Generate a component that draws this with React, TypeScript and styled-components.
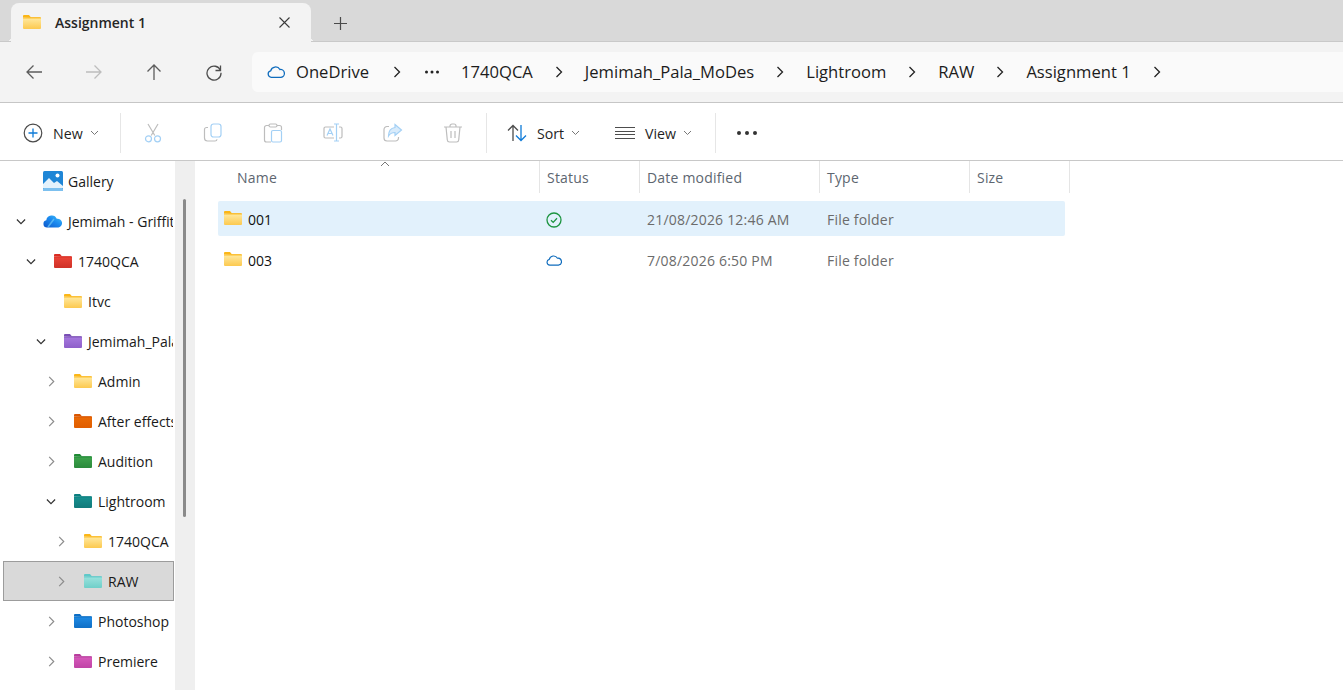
import React, { useId } from 'react';
import styled, { createGlobalStyle } from 'styled-components';

const UI_FONT = '"Open Sans", "Noto Sans", "Liberation Sans", sans-serif';

const GlobalStyle = createGlobalStyle`
  html, body {
    margin: 0;
    padding: 0;
    height: 100%;
    background: #ffffff;
    overflow: hidden;
  }
  body {
    font-family: ${UI_FONT};
    color: #1a1a1a;
  }
  #root {
    height: 100%;
  }
`;

const Window = styled.div`
  display: flex;
  flex-direction: column;
  width: 1343px;
  height: 690px;
  overflow: hidden;
`;

/* Tab strip */
const TabStrip = styled.div`
  display: flex;
  align-items: flex-end;
  height: 41px;
  padding-left: 11px;
  background: #d9d9d9;
  border-bottom: 1px solid #c9c9c9;
  flex-shrink: 0;
`;

const Tab = styled.div`
  position: relative;
  display: flex;
  align-items: center;
  width: 300px;
  height: 39px;
  margin-bottom: -1px;
  padding: 0 21px 1px 12px;
  box-sizing: border-box;
  background: #f3f3f3;
  border-radius: 8px 8px 0 0;

  &::before,
  &::after {
    content: '';
    position: absolute;
    bottom: 1px;
    width: 4px;
    height: 4px;
  }
  &::before {
    left: -4px;
    background: radial-gradient(circle at 0 0, transparent 4px, #f3f3f3 4px);
  }
  &::after {
    right: -4px;
    background: radial-gradient(circle at 100% 0, transparent 4px, #f3f3f3 4px);
  }
`;

const TabTitle = styled.span`
  flex: 1;
  margin-left: 14px;
  font-size: 14px;
  font-weight: 600;
  color: #262626;
`;

const NewTab = styled.div`
  display: flex;
  margin: 0 0 11px 23px;
`;

/* Navigation bar */
const NavBar = styled.div`
  display: flex;
  align-items: center;
  height: 60px;
  background: #f3f3f3;
  border-bottom: 1px solid #c6c6c6;
  flex-shrink: 0;
`;

const NavButtons = styled.div`
  display: grid;
  grid-template-columns: repeat(4, 60px);
  justify-items: center;
  width: 252px;
  padding-left: 4px;
  box-sizing: border-box;
`;

const AddressBar = styled.div`
  flex: 1;
  display: flex;
  align-items: center;
  gap: 21px;
  height: 40px;
  padding-left: 15px;
  background: #fafafa;
  border-radius: 6px 0 0 6px;
  font-size: 16.6px;
  color: #1c1c1c;
  white-space: nowrap;
`;

const Crumb = styled.span`
  display: inline-flex;
  align-items: center;
  padding-bottom: 1px;
`;

const CloudCrumb = styled(Crumb)`
  gap: 11px;
  margin-right: 2px;
`;

const CrumbDots = styled.span`
  display: flex;
  margin-left: 2px;
`;

/* Command bar */
const CommandBar = styled.div`
  display: flex;
  align-items: center;
  height: 58px;
  padding-top: 3px;
  box-sizing: border-box;
  background: #ffffff;
  border-bottom: 1px solid #c8c8c8;
  flex-shrink: 0;
`;

const CommandLabel = styled.button<{ $width: number; $pad: number }>`
  display: flex;
  align-items: center;
  width: ${(p) => p.$width}px;
  height: 40px;
  padding: 0 0 0 ${(p) => p.$pad}px;
  box-sizing: border-box;
  border: 0;
  background: none;
  font: 400 14.2px ${UI_FONT};
  color: #1f1f1f;
`;

const LabelText = styled.span`
  margin: 0 7px 0 10px;
`;

const IconCommand = styled.div`
  display: flex;
  justify-content: center;
  width: 60px;
`;

const Divider = styled.div`
  width: 1px;
  height: 40px;
  background: #e6e6e6;
  flex-shrink: 0;
`;

const IconGroup = styled.div`
  display: flex;
  padding: 0 3px 0 2px;
`;

const More = styled.div`
  display: flex;
  margin-left: 21px;
`;

/* Body */
const Body = styled.div`
  flex: 1;
  display: flex;
  min-height: 0;
`;

const Tree = styled.nav`
  width: 175px;
  flex-shrink: 0;
  overflow: hidden;
`;

const TreeRow = styled.div<{ $level: number; $selected?: boolean }>`
  display: flex;
  align-items: center;
  width: 171px;
  height: 40px;
  margin-left: 3px;
  padding-left: ${(p) => 12 + p.$level * 10}px;
  box-sizing: border-box;
  overflow: hidden;
  white-space: nowrap;
  font-size: 14px;
  color: #1a1a1a;
  border: 1px solid ${(p) => (p.$selected ? '#9c9c9c' : 'transparent')};
  background: ${(p) => (p.$selected ? '#d9d9d9' : 'transparent')};
`;

const TreeChevronSlot = styled.span`
  display: flex;
  justify-content: center;
  width: 10px;
  margin-right: 17px;
  flex-shrink: 0;
`;

const TreeIcon = styled.span`
  display: flex;
  justify-content: center;
  width: 20px;
  margin-right: 5px;
  flex-shrink: 0;
`;

const ScrollTrack = styled.div`
  width: 20px;
  margin-right: 1px;
  padding: 38px 0 0 8px;
  box-sizing: border-box;
  background: #efefef;
  flex-shrink: 0;
`;

const ScrollThumb = styled.div`
  width: 3px;
  height: 318px;
  border-radius: 2px;
  background: #8a8a8a;
`;

/* File list */
const ListPane = styled.main`
  flex: 1;
  padding-left: 22px;
`;

const ListHeader = styled.div`
  position: relative;
  display: grid;
  grid-template-columns: 322px 100px 180px 150px 100px;
  width: 852px;
  height: 32px;
  margin-bottom: 8px;
`;

const HeaderCell = styled.div<{ $pad?: number }>`
  padding: 1px 0 0 ${(p) => p.$pad ?? 7}px;
  border-right: 1px solid #e5e5e5;
  display: flex;
  align-items: center;
  font-size: 14px;
  letter-spacing: 0.2px;
  color: #5d6670;
`;

const SortCaret = styled.svg`
  position: absolute;
  left: 162px;
  top: 0;
`;

const FileRow = styled.div<{ $selected?: boolean }>`
  display: grid;
  grid-template-columns: 322px 100px 180px 150px 95px;
  width: 847px;
  height: 35px;
  margin-bottom: 6px;
  border-radius: 2px;
  background: ${(p) => (p.$selected ? '#e2f1fc' : 'transparent')};
  font-size: 14px;
  line-height: 19px;
`;

const NameCell = styled.div`
  display: flex;
  align-items: flex-start;
  gap: 6px;
  padding: 10px 0 0 6px;
  color: #111111;
`;

const NameText = styled.span`
  margin-top: -1px;
`;

const StatusCell = styled.div<{ $top: number }>`
  display: flex;
  align-items: flex-start;
  padding: ${(p) => p.$top}px 0 0 6px;
`;

const MutedCell = styled.div`
  padding: 9px 0 0 7px;
  letter-spacing: 0.2px;
  color: #6b6b6b;
`;

/* Icons */
interface FolderTone {
  tab: string;
  top: string;
  bottom: string;
}

const tones: Record<string, FolderTone> = {
  yellow: { tab: '#fbb617', top: '#ffe9a0', bottom: '#fcc94f' },
  red: { tab: '#d92d22', top: '#ea4438', bottom: '#cf3127' },
  purple: { tab: '#7a4fb5', top: '#a679de', bottom: '#8e5fca' },
  orange: { tab: '#d95600', top: '#ea6a05', bottom: '#e05d00' },
  green: { tab: '#1f8a35', top: '#3da34c', bottom: '#2b8a3c' },
  teal: { tab: '#0b7f80', top: '#17908f', bottom: '#127a7b' },
  aqua: { tab: '#5fc9c9', top: '#9ae2dd', bottom: '#6fcfc9' },
  blue: { tab: '#0c6ec6', top: '#1f8ae4', bottom: '#0f6fc6' },
  magenta: { tab: '#b93d9e', top: '#d659bb', bottom: '#c043a6' },
};

const Folder = ({ tone = 'yellow' }: { tone?: string }) => {
  const id = useId();
  const c = tones[tone];
  return (
    <svg width="18" height="14" viewBox="0 0 18 14">
      <defs>
        <linearGradient id={id} x1="0" y1="0" x2="0" y2="1">
          <stop offset="0" stopColor={c.top} />
          <stop offset="1" stopColor={c.bottom} />
        </linearGradient>
      </defs>
      <path d="M0 1a1 1 0 0 1 1-1h5l2 2.500H0Z" fill={c.tab} />
      <path d="M0 3h18v10a1 1 0 0 1-1 1H1a1 1 0 0 1-1-1Z" fill={`url(#${id})`} />
      <path d="M8 2h9a1 1 0 0 1 1 1v.500H0V2.400Z" fill={c.tab} opacity="0.85" />
    </svg>
  );
};

const Chevron = ({ open, dim }: { open?: boolean; dim?: boolean }) => (
  <svg width="11" height="11" viewBox="0 0 11 11" fill="none" stroke={dim ? '#8c8c8c' : '#333333'} strokeWidth="1.3">
    {open ? <path d="M1 3.300l4.500 4.500L10 3.300" /> : <path d="M3.500 0.500 8.500 5.500l-5 5" />}
  </svg>
);

const CrumbChevron = () => (
  <svg width="10" height="12" viewBox="0 0 10 12" fill="none" stroke="#222222" strokeWidth="1.3">
    <path d="M2.500 1 7.500 6l-5 5" />
  </svg>
);

const Caret = () => (
  <svg width="9" height="6" viewBox="0 0 9 6" fill="none" stroke="#777777" strokeWidth="1">
    <path d="M1 1l3.500 3.500L8 1" />
  </svg>
);

const Arrow = ({ dir, color }: { dir: 'left' | 'right' | 'up'; color: string }) => {
  const d = {
    left: 'M17 9H2M8.500 2.500 2 9l6.500 6.500',
    right: 'M1 9h15M9.500 2.500 16 9l-6.500 6.500',
    up: 'M9 17V2M2.500 8.500 9 2l6.500 6.500',
  }[dir];
  return (
    <svg width="18" height="18" viewBox="0 0 18 18" fill="none" stroke={color} strokeWidth="1.3">
      <path d={d} />
    </svg>
  );
};

const Refresh = () => (
  <svg width="18" height="18" viewBox="0 0 18 18" fill="none" stroke="#4d4d4d" strokeWidth="1.3">
    <path d="M15.500 7.500A7 7 0 1 0 16 9.800" />
    <path d="M15.500 2.500v5h-5" />
  </svg>
);

const CloudOutline = ({ size = 18 }: { size?: number }) => (
  <svg width={size} height={Math.round(size * 0.72)} viewBox="0 0 18 13" fill="none" stroke="#0f6cbd" strokeWidth="1.300">
    <path d="M4.300 12.300A3.300 3.300 0 0 1 3.700 5.800 5 5 0 0 1 12.900 4.500 3.900 3.900 0 0 1 14 12.300Z" />
  </svg>
);

const StatusOk = () => (
  <svg width="16" height="16" viewBox="0 0 16 16" fill="none" stroke="#1c9440" strokeWidth="1.300">
    <circle cx="8" cy="8" r="7" />
    <path d="M5 8.200l2.200 2.200L11 6.300" />
  </svg>
);

const CirclePlus = () => (
  <svg width="20" height="20" viewBox="0 0 20 20" fill="none">
    <circle cx="10" cy="10" r="8.800" stroke="#4a4a4a" strokeWidth="1.200" />
    <path d="M10 5.500v9M5.500 10h9" stroke="#0f7bd8" strokeWidth="1.300" />
  </svg>
);

const GREY = '#bdbdbd';
const TINT = '#a3d0f5';

const Cut = () => (
  <svg width="20" height="20" viewBox="0 0 20 20" fill="none" strokeWidth="1.200">
    <path d="M5 1l6.800 11.500M15 1 8.200 12.500" stroke={GREY} />
    <circle cx="5.500" cy="15.800" r="3" stroke={TINT} />
    <circle cx="14.500" cy="15.800" r="3" stroke={TINT} />
  </svg>
);

const Copy = () => (
  <svg width="20" height="20" viewBox="0 0 20 20" fill="none" strokeWidth="1.200">
    <path d="M5 4.500H3.500A2 2 0 0 0 1.500 6.500V15a3 3 0 0 0 3 3H12a2 2 0 0 0 2-1.800" stroke={GREY} />
    <rect x="8" y="1" width="10" height="13" rx="2.500" stroke={TINT} fill="#ffffff" />
  </svg>
);

const Paste = () => (
  <svg width="20" height="20" viewBox="0 0 20 20" fill="none" strokeWidth="1.200">
    <path d="M6 2.500H3.500A2 2 0 0 0 1.500 4.500V17a2 2 0 0 0 2 2H8M14 2.500h2.500a2 2 0 0 1 2 2V7" stroke={GREY} />
    <rect x="6" y="1" width="8" height="3" rx="1.500" stroke={GREY} />
    <rect x="8.500" y="7.500" width="10" height="11.500" rx="1.500" stroke={TINT} fill="#ffffff" />
  </svg>
);

const Rename = () => (
  <svg width="20" height="20" viewBox="0 0 20 20" fill="none" strokeWidth="1.200">
    <path d="M11 4H2.500A1.500 1.500 0 0 0 1 5.500v8A1.500 1.500 0 0 0 2.500 15H11M16 4h1.500A1.500 1.500 0 0 1 19 5.500v8a1.500 1.500 0 0 1-1.500 1.500H16" stroke={GREY} />
    <path d="M11 1h5M11 18h5M13.500 1v17" stroke={TINT} />
    <path d="M4 12.500 7 6l3 6.500M5 10.500h4" stroke={TINT} />
  </svg>
);

const Share = () => (
  <svg width="20" height="20" viewBox="0 0 20 20" fill="none" strokeWidth="1.200">
    <path d="M6 3.500H4A3 3 0 0 0 1 6.500V15a3 3 0 0 0 3 3h8.500a3 3 0 0 0 3-3v-1" stroke={GREY} />
    <path d="M12 1.500 18.500 7 12 12.500V9.500c-3 0-5 1-6.500 3.500 0-5 2.500-8 6.500-8.500Z" stroke={TINT} fill="#d8ebfb" />
  </svg>
);

const Trash = () => (
  <svg width="20" height="20" viewBox="0 0 20 20" fill="none" stroke={GREY} strokeWidth="1.200">
    <path d="M1 4h18M7 4V3a2 2 0 0 1 2-2h2a2 2 0 0 1 2 2v1M3 4l1.300 13a2.200 2.200 0 0 0 2.200 2h7a2.200 2.200 0 0 0 2.200-2L17 4M8 8v7M12 8v7" />
  </svg>
);

const SortIcon = () => (
  <svg width="20" height="18" viewBox="0 0 20 18" fill="none" strokeWidth="1.300">
    <path d="M6 17V1.500M1 6.500l5-5 5 5" stroke="#4d4d4d" />
    <path d="M14 1v15.500M9 11.500l5 5 5-5" stroke="#0f7bd8" />
  </svg>
);

const ViewIcon = () => (
  <svg width="20" height="14" viewBox="0 0 20 14" fill="none" stroke="#4d4d4d" strokeWidth="1">
    <path d="M0 1.500h20M0 5.500h20M0 8.500h20M0 12.500h20" />
  </svg>
);

const Dots = ({ size = 20, gap = 8, r = 2, color = '#333333' }: { size?: number; gap?: number; r?: number; color?: string }) => (
  <svg width={size} height="4" viewBox={`0 0 ${size} 4`} fill={color}>
    <circle cx={r} cy="2" r={r} />
    <circle cx={r + gap} cy="2" r={r} />
    <circle cx={r + gap * 2} cy="2" r={r} />
  </svg>
);

const GalleryIcon = () => (
  <svg width="20" height="20" viewBox="0 0 20 20">
    <rect x="0" y="0" width="20" height="20" rx="1.500" fill="#1f86d6" />
    <rect x="0" y="17" width="20" height="3" rx="1" fill="#7cc0ef" />
    <path d="M0 17v-4l6-6 5 5 3-2 6 5v2Z" fill="#e4f2fc" />
    <circle cx="14.500" cy="4.500" r="2" fill="#ffffff" />
  </svg>
);

const OneDriveIcon = () => (
  <svg width="20" height="14" viewBox="0 0 20 14">
    <defs>
      <linearGradient id="onedrive-fill" x1="0" y1="1" x2="1" y2="0">
        <stop offset="0" stopColor="#0b56c9" />
        <stop offset="0.55" stopColor="#1b8bf0" />
        <stop offset="1" stopColor="#46c4f7" />
      </linearGradient>
    </defs>
    <path d="M4 13.500A3.700 3.700 0 0 1 3.300 6.200 5.500 5.500 0 0 1 13.800 4.800 4.400 4.400 0 0 1 15.500 13.500Z" fill="url(#onedrive-fill)" />
    <path d="M5 13 11 5" stroke="#6cc8f7" strokeWidth="1.500" opacity="0.7" />
  </svg>
);

const CloseX = () => (
  <svg width="11" height="11" viewBox="0 0 11 11" fill="none" stroke="#3a3a3a" strokeWidth="1.100">
    <path d="M0.500 0.500l10 10M10.500 0.500l-10 10" />
  </svg>
);

const PlusIcon = () => (
  <svg width="13" height="13" viewBox="0 0 13 13" fill="none" stroke="#4a4a4a" strokeWidth="1.200">
    <path d="M6.500 0v13M0 6.500h13" />
  </svg>
);

/* Data */
interface TreeItem {
  label: string;
  level: number;
  tone?: string;
  icon?: 'gallery' | 'onedrive';
  chevron?: 'open' | 'closed';
  selected?: boolean;
}

const treeItems: TreeItem[] = [
  { label: 'Gallery', level: 0, icon: 'gallery' },
  { label: 'Jemimah - Griffith University', level: 0, icon: 'onedrive', chevron: 'open' },
  { label: '1740QCA', level: 1, tone: 'red', chevron: 'open' },
  { label: 'Itvc', level: 2, tone: 'yellow' },
  { label: 'Jemimah_Pala_MoDes', level: 2, tone: 'purple', chevron: 'open' },
  { label: 'Admin', level: 3, tone: 'yellow', chevron: 'closed' },
  { label: 'After effects', level: 3, tone: 'orange', chevron: 'closed' },
  { label: 'Audition', level: 3, tone: 'green', chevron: 'closed' },
  { label: 'Lightroom', level: 3, tone: 'teal', chevron: 'open' },
  { label: '1740QCA', level: 4, tone: 'yellow', chevron: 'closed' },
  { label: 'RAW', level: 4, tone: 'aqua', chevron: 'closed', selected: true },
  { label: 'Photoshop', level: 3, tone: 'blue', chevron: 'closed' },
  { label: 'Premiere', level: 3, tone: 'magenta', chevron: 'closed' },
];

const crumbs = ['1740QCA', 'Jemimah_Pala_MoDes', 'Lightroom', 'RAW', 'Assignment 1'];

const files = [
  { name: '001', status: 'ok', modified: '21/08/2026 12:46 AM', type: 'File folder', selected: true },
  { name: '003', status: 'cloud', modified: '7/08/2026 6:50 PM', type: 'File folder', selected: false },
];

const App: React.FC = () => (
  <Window>
    <GlobalStyle />
    <TabStrip>
      <Tab>
        <Folder />
        <TabTitle>Assignment 1</TabTitle>
        <CloseX />
      </Tab>
      <NewTab>
        <PlusIcon />
      </NewTab>
    </TabStrip>

    <NavBar>
      <NavButtons>
        <Arrow dir="left" color="#5c5c5c" />
        <Arrow dir="right" color="#bdbdbd" />
        <Arrow dir="up" color="#5c5c5c" />
        <Refresh />
      </NavButtons>
      <AddressBar>
        <CloudCrumb>
          <CloudOutline />
          OneDrive
        </CloudCrumb>
        <CrumbChevron />
        <CrumbDots>
          <Dots size={15} gap={5.500} r={1.500} color="#222222" />
        </CrumbDots>
        {crumbs.map((crumb) => (
          <React.Fragment key={crumb}>
            <Crumb>{crumb}</Crumb>
            <CrumbChevron />
          </React.Fragment>
        ))}
      </AddressBar>
    </NavBar>

    <CommandBar>
      <CommandLabel $width={120} $pad={23}>
        <CirclePlus />
        <LabelText>New</LabelText>
        <Caret />
      </CommandLabel>
      <Divider />
      <IconGroup>
        {[Cut, Copy, Paste, Rename, Share, Trash].map((Icon, i) => (
          <IconCommand key={i}>
            <Icon />
          </IconCommand>
        ))}
      </IconGroup>
      <Divider />
      <CommandLabel $width={108} $pad={20}>
        <SortIcon />
        <LabelText>Sort</LabelText>
        <Caret />
      </CommandLabel>
      <CommandLabel $width={120} $pad={20}>
        <ViewIcon />
        <LabelText>View</LabelText>
        <Caret />
      </CommandLabel>
      <Divider />
      <More>
        <Dots />
      </More>
    </CommandBar>

    <Body>
      <Tree>
        {treeItems.map((item) => (
          <TreeRow key={`${item.label}-${item.level}`} $level={item.level} $selected={item.selected}>
            <TreeChevronSlot>
              {item.chevron && <Chevron open={item.chevron === 'open'} dim={item.chevron === 'closed'} />}
            </TreeChevronSlot>
            <TreeIcon>
              {item.icon === 'gallery' && <GalleryIcon />}
              {item.icon === 'onedrive' && <OneDriveIcon />}
              {item.tone && <Folder tone={item.tone} />}
            </TreeIcon>
            {item.label}
          </TreeRow>
        ))}
      </Tree>
      <ScrollTrack>
        <ScrollThumb />
      </ScrollTrack>

      <ListPane>
        <ListHeader>
          <HeaderCell $pad={19}>Name</HeaderCell>
          <HeaderCell>Status</HeaderCell>
          <HeaderCell>Date modified</HeaderCell>
          <HeaderCell>Type</HeaderCell>
          <HeaderCell>Size</HeaderCell>
          <SortCaret width="10" height="6" viewBox="0 0 10 6" fill="none" stroke="#777777" strokeWidth="1">
            <path d="M1 5l4-4 4 4" />
          </SortCaret>
        </ListHeader>
        {files.map((file) => (
          <FileRow key={file.name} $selected={file.selected}>
            <NameCell>
              <Folder />
              <NameText>{file.name}</NameText>
            </NameCell>
            <StatusCell $top={file.status === 'ok' ? 11 : 12}>
              {file.status === 'ok' ? <StatusOk /> : <CloudOutline size={16} />}
            </StatusCell>
            <MutedCell>{file.modified}</MutedCell>
            <MutedCell>{file.type}</MutedCell>
            <div />
          </FileRow>
        ))}
      </ListPane>
    </Body>
  </Window>
);

export default App;
